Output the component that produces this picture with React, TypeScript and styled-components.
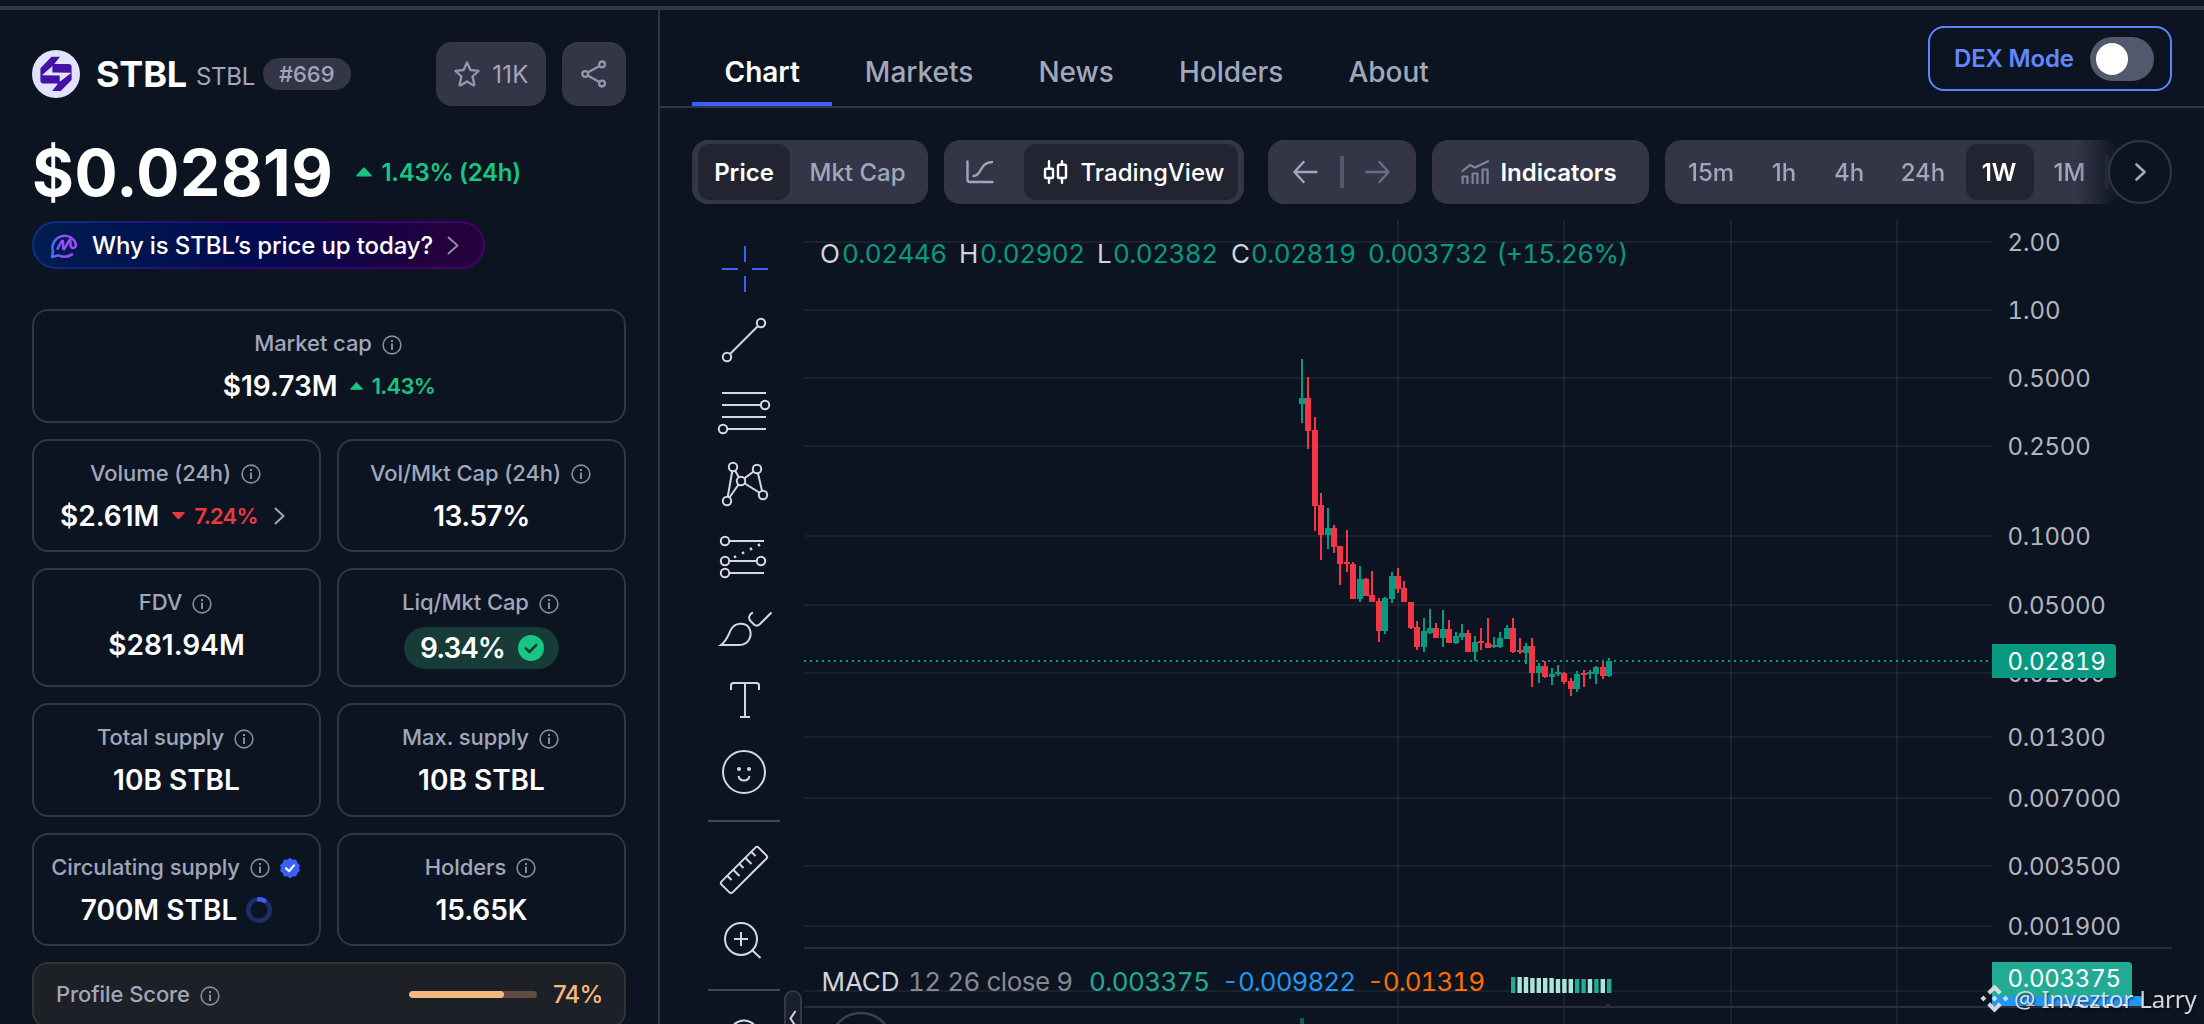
import React from 'react';
import styled, { createGlobalStyle, css } from 'styled-components';

const c = {
  bg: '#0d1421',
  line: '#323546',
  panel: '#343547',
  dark: '#222531',
  text: '#ffffff',
  muted: '#a1a7bb',
  dim: '#858ca2',
  green: '#16c784',
  red: '#ea3943',
  blue: '#3861fb',
  up: '#089981',
  down: '#f23645',
  orange: '#f5b97f',
};

const Global = createGlobalStyle`
  * { box-sizing: border-box; }
  body {
    margin: 0;
    background: ${c.bg};
    color: ${c.text};
    font-family: Inter, "Noto Sans", sans-serif;
    overflow: hidden;
  }
  svg { display: block; flex: none; }
`;

const Page = styled.div`
  position: relative;
  width: 2204px;
  height: 1024px;
  overflow: hidden;
  display: flex;
  flex-direction: column;
`;
const TopLine = styled.div`
  flex: none;
  height: 10px;
  border-bottom: 4px solid ${c.line};
`;
const Body = styled.div`
  flex: 1;
  min-height: 0;
  display: flex;
`;

/* ---------- sidebar ---------- */
const Sidebar = styled.aside`
  width: 660px;
  flex: none;
  padding: 32px 32px 0;
  border-right: 2px solid ${c.line};
  overflow: hidden;
`;
const CoinHeader = styled.div`
  display: flex;
  align-items: center;
  height: 64px;
`;
const CoinName = styled.h1`
  margin: 0 0 0 16px;
  font-size: 36px;
  font-weight: 700;
  line-height: 44px;
  letter-spacing: -0.2px;
`;
const CoinSymbol = styled.span`
  margin: 5px 8px 0 9px;
  font-size: 24px;
  letter-spacing: -0.3px;
  color: ${c.muted};
`;
const Rank = styled.span`
  height: 32px;
  padding: 0 16px;
  border-radius: 16px;
  background: ${c.panel};
  color: ${c.muted};
  font-size: 22px;
  font-weight: 500;
  line-height: 32px;
`;
const SquareButton = styled.button<{ $w: number; $ml?: string }>`
  display: flex;
  align-items: center;
  justify-content: center;
  gap: 11px;
  width: ${p => p.$w}px;
  height: 64px;
  margin-left: ${p => p.$ml || '16px'};
  padding: 0;
  border: 0;
  border-radius: 16px;
  background: ${c.panel};
  color: ${c.muted};
  font: 400 24px Inter, sans-serif;
  letter-spacing: 0.3px;
`;
const PriceRow = styled.div`
  display: flex;
  align-items: center;
  gap: 23px;
  height: 92px;
  margin-top: 20px;
`;
const Price = styled.div`
  font-size: 64px;
  font-weight: 700;
  letter-spacing: 0.55px;
`;
const Change = styled.span<{ $down?: boolean; $big?: boolean }>`
  display: inline-flex;
  align-items: center;
  gap: ${p => (p.$big ? 9 : 9)}px;
  color: ${p => (p.$down ? c.red : c.green)};
  font-size: ${p => (p.$big ? 24 : 22)}px;
  font-weight: 600;
  letter-spacing: ${p => (p.$big ? -0.25 : -0.7)}px;
`;
const WhyPill = styled.button`
  display: flex;
  align-items: center;
  width: 453px;
  height: 48px;
  margin-top: 3px;
  padding: 0 0 0 16px;
  border: 2px solid transparent;
  border-radius: 24px;
  background:
    linear-gradient(90deg, #001d4e, #020a52 52%, #25003d 92%) padding-box,
    linear-gradient(90deg, #0a2f80, #350073 50%, #470070) border-box;
  color: #fff;
  font: 500 24px Inter, sans-serif;
  letter-spacing: -0.12px;
  white-space: nowrap;
`;
const WhyText = styled.span`
  margin: 0 14px;
`;
const Stats = styled.div`
  display: grid;
  grid-template-columns: 289px 289px;
  grid-template-rows: 113.5px 113.5px 119px 113.5px 113.5px 66px;
  gap: 16px;
  margin-top: 40px;
`;
const Card = styled.div<{ $wide?: boolean }>`
  display: flex;
  flex-direction: column;
  align-items: center;
  padding-top: 14px;
  border: 2px solid ${c.line};
  border-radius: 16px;
  white-space: nowrap;
  ${p => p.$wide && css`grid-column: span 2;`}
`;
const Label = styled.div`
  display: flex;
  align-items: center;
  gap: 10px;
  height: 36px;
  margin-right: 2px;
  color: ${c.muted};
  font-size: 22px;
  font-weight: 500;
  letter-spacing: -0.08px;
  svg { margin-top: 3px; }
`;
const Value = styled.div<{ $gap?: number; $tight?: boolean }>`
  display: flex;
  align-items: center;
  gap: ${p => p.$gap || 13}px;
  height: 42px;
  margin-top: 4px;
  font-size: 28px;
  font-weight: 600;
  letter-spacing: ${p => (p.$tight ? -0.5 : 0)}px;
`;
const LinkChevron = styled.span`
  margin: 0 8px 0 3px;
`;
const LiqPill = styled.div`
  display: flex;
  align-items: center;
  gap: 13px;
  height: 42px;
  margin-top: 7px;
  padding: 0 15px 0 16px;
  border-radius: 21px;
  background: #173b37;
  font-size: 28px;
  font-weight: 600;
  letter-spacing: -1px;
`;
const ProfileCard = styled.div`
  grid-column: span 2;
  display: flex;
  align-items: center;
  padding: 0 24px 2px 22px;
  border: 2px solid #37322f;
  border-radius: 16px;
  background: #1e2028;
`;
const ProfileLabel = styled(Label)`
  flex: 1;
  margin-right: 0;
`;
const Meter = styled.div`
  width: 128px;
  height: 7px;
  border-radius: 4px;
  background: #5f4d40;
  overflow: hidden;
`;
const MeterFill = styled.div`
  height: 100%;
  border-radius: 4px;
  background: ${c.orange};
`;
const Score = styled.span`
  width: 47px;
  margin-left: 16px;
  color: ${c.orange};
  font-size: 24px;
  font-weight: 500;
  letter-spacing: -0.8px;
`;

/* ---------- main ---------- */
const Main = styled.main`
  flex: 1;
  min-width: 0;
  display: flex;
  flex-direction: column;
`;
const TabBar = styled.nav`
  flex: none;
  display: flex;
  align-items: flex-end;
  height: 98px;
  padding: 0 32px;
  border-bottom: 2px solid ${c.line};
`;
const Tab = styled.a<{ $active?: boolean }>`
  display: flex;
  align-items: center;
  justify-content: center;
  height: 68px;
  padding: 4px 32.500px 0;
  border-bottom: 4px solid ${p => (p.$active ? c.blue : 'transparent')};
  color: ${p => (p.$active ? '#fff' : c.muted)};
  font-size: 28px;
  font-weight: ${p => (p.$active ? 600 : 500)};
`;
const DexMode = styled.div`
  display: flex;
  align-items: center;
  gap: 16px;
  align-self: flex-start;
  height: 65px;
  width: 244px;
  margin: 16px 0 0 auto;
  padding-left: 24px;
  border: 2px solid #5c84ff;
  border-radius: 16px;
  color: #6188ff;
  font-size: 24px;
  font-weight: 600;
  white-space: nowrap;
  letter-spacing: -0.15px;
`;
const Toggle = styled.div`
  width: 64px;
  height: 44px;
  padding: 6px;
  flex: none;
  border-radius: 22px;
  background: #53586c;
`;
const Knob = styled.div`
  width: 32px;
  height: 32px;
  border-radius: 50%;
  background: #fff;
`;
const Toolbar = styled.div`
  flex: none;
  display: flex;
  height: 64px;
  margin: 32px 32px 0;
`;
const Group = styled.div<{ $w: number; $ml?: number }>`
  display: flex;
  align-items: center;
  flex: none;
  width: ${p => p.$w}px;
  margin-left: ${p => p.$ml || 0}px;
  padding: 4px 6px;
  border-radius: 16px;
  background: ${c.panel};
`;
const Seg = styled.div<{ $w: number; $active?: boolean; $pl?: number; $pr?: number }>`
  display: flex;
  align-items: center;
  justify-content: center;
  gap: 13px;
  flex: none;
  width: ${p => p.$w}px;
  height: 56px;
  padding: 0 ${p => p.$pr || 0}px 0 ${p => p.$pl || 0}px;
  border-radius: 12px;
  background: ${p => (p.$active ? c.dark : 'transparent')};
  color: ${p => (p.$active ? '#fff' : c.muted)};
  font-size: 24px;
  font-weight: ${p => (p.$active ? 600 : 500)};
  white-space: nowrap;
`;
const IndicatorsButton = styled(Group)`
  justify-content: center;
  gap: 10px;
  padding-left: 0;
  padding-right: 3px;
  font-size: 24px;
  font-weight: 600;
`;
const Medium = styled.span`
  font-weight: 500;
  letter-spacing: 0;
`;
const TimeStrip = styled(Group)`
  padding: 4px 0 4px 5px;
  -webkit-mask-image: linear-gradient(90deg, #000 412px, transparent 456px);
  mask-image: linear-gradient(90deg, #000 412px, transparent 456px);
`;
const Bar = styled.div<{ $ml?: number }>`
  width: 4px;
  height: 32px;
  flex: none;
  margin-left: ${p => p.$ml || 0}px;
  background: #53586c;
`;
const NextButton = styled.button`
  display: flex;
  align-items: center;
  justify-content: center;
  flex: none;
  width: 64px;
  height: 64px;
  margin-left: -12px;
  padding: 0;
  border: 2px solid ${c.line};
  border-radius: 50%;
  background: ${c.bg};
  z-index: 1;
`;
const ChartArea = styled.div`
  flex: 1;
  min-height: 0;
  display: flex;
  margin-top: 16px;
  padding-left: 32px;
`;
const Tools = styled.div`
  width: 112px;
  flex: none;
  display: flex;
  flex-direction: column;
  padding: 13px 16px 0;
`;
const ToolRule = styled.div`
  flex: none;
  width: 72px;
  height: 2px;
  margin: 11px 0 12px;
  background: #434651;
`;
const Handle = styled.div`
  position: absolute;
  left: 784px;
  top: 990px;
  display: flex;
  justify-content: center;
  width: 18px;
  height: 60px;
  padding-top: 18px;
  border: 2px solid #363843;
  border-radius: 9px;
  background: #191e2b;
`;
const Watermark = styled.div`
  position: absolute;
  left: 1980px;
  top: 982px;
  display: flex;
  align-items: center;
  gap: 5px;
  height: 32px;
  color: #e3e5ea;
  font: 24px "Noto Sans", sans-serif;
  letter-spacing: -0.15px;
  white-space: nowrap;
  opacity: 0.92;
  text-shadow: 1px 2px 2px rgba(0, 0, 0, 0.55);
`;

/* ---------- small icons ---------- */
const Info = () => (
  <svg width="20" height="20" viewBox="0 0 20 20" fill="none" stroke={c.dim} strokeWidth="1.6">
    <circle cx="10" cy="10" r="8.9" />
    <path d="M10 8.6V15" strokeWidth="2" />
    <path d="M10 5V7" strokeWidth="2" />
  </svg>
);
const Triangle = ({ w = 13, down = false }: { w?: number; down?: boolean }) => (
  <svg width={w} height={w * 0.6} viewBox="0 0 12 7.2" preserveAspectRatio="none" fill="currentColor" stroke="currentColor" strokeLinejoin="round">
    {down ? <path d="M.7 .6H11.3L6 6.5Z" /> : <path d="M.7 6.6H11.3L6 .7Z" />}
  </svg>
);
const Chevron = ({ w, h, color = c.dim, sw = 2 }: { w: number; h: number; color?: string; sw?: number }) => (
  <svg width={w} height={h} viewBox={`0 0 ${w} ${h}`} fill="none" stroke={color} strokeWidth={sw} strokeLinecap="round" strokeLinejoin="round">
    <path d={`M1.5 1.5L${w - 1.5} ${h / 2}L1.5 ${h - 1.5}`} />
  </svg>
);
const CoinLogo = () => (
  <svg width="48" height="48" viewBox="32 50 48 48">
    <circle cx="56" cy="74" r="24" fill="#e2e2fd" />
    <path d="M51.5 56.7H60L54.3 64H68.6Q71.6 64 71.6 67V80L60.8 91H52.2L58 83.6H43.4Q40.4 83.6 40.4 80.6V68.3Z" fill="#4411a6" />
    <path d="M42 75.3L52.4 65.9V72.4L71.6 72.8L59.7 81.7V75.6Z" fill="#e2e2fd" />
  </svg>
);
const Star = () => (
  <svg width="28" height="28" viewBox="0 0 28 28" fill="none" stroke="#9298ac" strokeWidth="2.3" strokeLinejoin="round">
    <path d="M14 2.4L17.4 10L25.6 10.9L19.5 16.5L21.4 24.4Q21.3 25.6 20.2 25.2L14 21.4L7.8 25.2Q6.7 25.6 6.6 24.4L8.5 16.5L2.4 10.9L10.6 10Z" />
  </svg>
);
const Share = () => (
  <svg width="28" height="28" viewBox="0 0 28 28" fill="none" stroke="#9298ac" strokeWidth="2.3">
    <circle cx="22" cy="4.4" r="2.9" /><circle cx="22" cy="23.6" r="2.9" /><circle cx="5.2" cy="14" r="2.9" />
    <path d="M7.8 12.5L19.4 5.9M7.8 15.5L19.4 22.1" />
  </svg>
);
const CmcMark = () => (
  <svg width="28" height="28" viewBox="0 0 28 28" fill="none" strokeLinecap="round" strokeLinejoin="round" strokeWidth="2.5">
    <defs>
      <linearGradient id="cmc" gradientUnits="userSpaceOnUse" x1="0" y1="0" x2="26" y2="0"><stop offset="0" stopColor="#3f6cff" /><stop offset=".45" stopColor="#9050ff" /><stop offset="1" stopColor="#a845ff" /></linearGradient>
    </defs>
    <g stroke="url(#cmc)">
      <path d="M22 23.400Q16 27.500 8.500 24.300L2 26L3 20.500A12 12 0 1 1 26 13.300C26 17.600 20.800 18.300 20.500 14.500V10.500Q20.200 7.600 18.400 10.600L14.600 17.600Q13.200 19 13.100 16.600V11Q12.700 8.300 11.200 11L7.600 17.600" />
    </g>
  </svg>
);
const Check = () => (
  <svg width="26" height="26" viewBox="0 0 26 26">
    <circle cx="13" cy="13" r="13" fill={c.green} />
    <path d="M7.8 13.4L11.4 17L18.2 10" fill="none" stroke="#173b37" strokeWidth="2.6" strokeLinecap="round" strokeLinejoin="round" />
  </svg>
);
const Verified = () => (
  <svg width="20" height="20" viewBox="0 0 20 20">
    <path d="M10 .3L12.6 2.1L15.8 2.1L16.9 5.1L19.4 7L18.5 10L19.4 13L16.9 14.9L15.8 17.9L12.6 17.9L10 19.7L7.4 17.9L4.2 17.9L3.1 14.9L.6 13L1.5 10L.6 7L3.1 5.1L4.2 2.1L7.4 2.1Z" fill={c.blue} stroke={c.blue} strokeLinejoin="round" />
    <path d="M6 10.2L9 13.2L14 7.4" fill="none" stroke="#fff" strokeWidth="2.2" strokeLinecap="round" strokeLinejoin="round" />
  </svg>
);
const Ring = () => (
  <svg width="26" height="26" viewBox="0 0 26 26" fill="none" strokeWidth="4.4">
    <circle cx="13" cy="13" r="10.8" stroke="#1d2f6a" />
    <path d="M13 2.2A10.8 10.8 0 0 1 18.2 3.6" stroke="#3861fb" strokeLinecap="round" />
  </svg>
);
const LineChartIcon = () => (
  <svg width="28" height="24" viewBox="0 0 28 24" fill="none" stroke={c.muted} strokeWidth="2.4" strokeLinecap="round">
    <path d="M1.5 1.5V19.5Q1.5 22 4 22H26.5" />
    <path d="M7.5 16C16 16 13 2.5 26 2" />
  </svg>
);
const CandleIcon = () => (
  <svg width="25" height="24" viewBox="0 0 25 24" fill="none" stroke="#fff" strokeWidth="2.4" strokeLinecap="round" strokeLinejoin="round">
    <path d="M6 1.2V8.5M6 18V22.8M19 1.2V4.5M19 18V22.8" />
    <rect x="2" y="8.8" width="8" height="9.2" rx="1" /><rect x="15" y="4.8" width="8" height="13.2" rx="1" />
  </svg>
);
const Arrow = ({ flip = false }: { flip?: boolean }) => (
  <svg width="25" height="24" viewBox="0 0 25 24" fill="none" stroke={flip ? '#696f84' : c.muted} strokeWidth="2.4" strokeLinecap="round" strokeLinejoin="round">
    <path d={flip ? 'M1.5 12H23.5M14.5 2L23.5 12L14.5 22' : 'M23.5 12H1.5M10.5 2L1.5 12L10.5 22'} />
  </svg>
);
const IndicatorsIcon = () => (
  <svg width="29" height="24" viewBox="0 0 29 24" fill="none" stroke="#7d8399" strokeWidth="2.2" strokeLinecap="round" strokeLinejoin="round">
    <path d="M1.5 11L9 5L14 7.5L27 1.2" />
    <path d="M1.6 23V16.5H6.4V23M11.6 23V13.5H16.4V23M21.6 23V9.5H26.6V23" />
  </svg>
);

/* ---------- drawing tools ---------- */
const Tool = ({ y, children, color = '#d6d8e0' }: { y: number; color?: string; children: React.ReactNode }) => (
  <svg width="72" height="72" viewBox={`708 ${y} 72 72`} fill="none" stroke={color} strokeWidth="2">{children}</svg>
);
const Dots = ({ pts, r = 4.2 }: { pts: number[][]; r?: number }) => (
  <>{pts.map(([x, y]) => <circle key={`${x},${y}`} cx={x} cy={y} r={r} fill={c.bg} />)}</>
);

/* ---------- chart data ---------- */
const gridRows = [242, 310, 378, 446, 536, 605, 673, 737, 798, 866, 926, 991];
const gridCols = [1398, 1564, 1731, 1897];
const ticks: [string, number][] = [
  ['2.00', 242], ['1.00', 310], ['0.5000', 378], ['0.2500', 446], ['0.1000', 536], ['0.05000', 605],
  ['0.02500', 673], ['0.01300', 737], ['0.007000', 798], ['0.003500', 866], ['0.001900', 926],
];
/* x, high, body top, body bottom, low, rising */
const candles: number[][] = [
  [66, 57, 174, 192, 249, 1], [84, 111, 174, 273, 327, 0], [105, 231, 270, 498, 573, 0], [123, 459, 495, 585, 660, 0],
  [144, 504, 564, 585, 627, 1], [162, 555, 564, 621, 639, 0], [180, 618, 618, 672, 735, 0], [201, 570, 666, 672, 696, 0],
  [219, 666, 672, 777, 777, 0], [240, 678, 717, 777, 786, 1], [258, 714, 717, 768, 768, 0], [276, 693, 765, 786, 786, 0],
  [297, 774, 783, 873, 906, 0], [315, 771, 774, 873, 882, 1], [336, 696, 708, 777, 789, 1], [354, 684, 708, 747, 759, 0],
  [372, 723, 744, 786, 786, 0], [393, 786, 786, 864, 867, 0], [411, 843, 861, 921, 930, 0], [432, 834, 873, 921, 936, 1],
  [450, 807, 864, 879, 882, 1], [468, 849, 864, 894, 894, 0], [489, 810, 867, 894, 921, 1], [507, 840, 867, 909, 909, 0],
  [528, 876, 888, 909, 912, 1], [546, 852, 879, 891, 900, 1], [564, 870, 879, 936, 936, 0], [585, 888, 906, 936, 963, 1],
  [603, 864, 903, 909, 930, 0], [624, 834, 909, 924, 924, 0], [642, 891, 915, 921, 924, 1], [660, 876, 894, 921, 924, 1],
  [681, 855, 864, 897, 897, 1], [699, 834, 864, 936, 939, 0], [720, 894, 930, 936, 942, 0], [738, 909, 918, 939, 972, 1],
  [756, 894, 918, 999, 1041, 0], [777, 969, 978, 999, 1029, 1], [795, 963, 978, 1011, 1014, 0], [816, 984, 1002, 1011, 1035, 1],
  [834, 975, 996, 1002, 1008, 1], [852, 996, 999, 1026, 1032, 0], [873, 1014, 1023, 1047, 1068, 0], [891, 993, 1002, 1047, 1056, 1],
  [912, 990, 999, 1005, 1041, 0], [930, 990, 996, 1002, 1017, 1], [948, 978, 981, 1002, 1032, 1], [969, 963, 981, 1008, 1017, 0],
  [987, 954, 963, 1008, 1011, 1],
];
const px = (v: number) => 1280 + v / 3;
const py = (v: number) => 340 + v / 3;
const macdStrong = [0, 10, 11, 13, 15];
const macdTop = [977, 977, 977, 978, 978, 978, 978, 979, 979, 979, 979, 979, 979, 979, 979, 979];

/* text, x, rendered width, colour */
const ohlc: [string, number, number, string][] = [
  ['O', 820, 20, '#d1d4dc'], ['0.02446', 842, 105, c.up], ['H', 959, 20, '#d1d4dc'], ['0.02902', 980, 105, c.up],
  ['L', 1097, 16, '#d1d4dc'], ['0.02382', 1113, 105, c.up], ['C', 1231, 20, '#d1d4dc'], ['0.02819', 1251, 105, c.up],
  ['0.003732', 1368, 120, c.up], ['(+15.26%)', 1496.5, 132, c.up],
];
const macd: [string, number, number, string][] = [
  ['MACD', 821.5, 78, '#d1d4dc'], ['12 26 close 9', 908, 165, '#868993'], ['0.003375', 1089, 121, '#22ab94'],
  ['-0.009822', 1222, 134, '#2196f3'], ['-0.01319', 1367, 118, '#ff6d00'],
];
/* advance of a price label: fixed-width digits plus a point */
const tickWidth = (t: string) => (t.length - 1) * 15.1 + 7.8;

const ChartSvg = styled.svg`
  font-family: Inter, sans-serif;
  font-variant-numeric: tabular-nums;
`;

const Chart = () => (
  <ChartSvg width="1400" height="804" viewBox="804 220 1400 804" fontSize="24">
    <g fill="#ffffff" fillOpacity="0.06" shapeRendering="crispEdges">
      {gridRows.map(y => <rect key={y} x="804" y={y - 1} width="1188" height="2" />)}
      {gridCols.map(x => <rect key={x} x={x - 1} y="220" width="2" height="804" />)}
    </g>
    <g fill="#2b2e39" shapeRendering="crispEdges">
      <rect x="804" y="947" width="1368" height="2" />
      <rect x="804" y="1006" width="1368" height="2" />
    </g>
    <g shapeRendering="crispEdges">
      {candles.map(([x, h, t, b, l, up]) => (
        <g key={x} fill={up ? c.up : c.down}>
          <rect x={px(x) - 1} y={py(h)} width="2" height={(l - h) / 3} />
          <rect x={px(x) - 3} y={py(t)} width="6" height={(b - t) / 3} />
        </g>
      ))}
    </g>
    <path d="M804 661H1992" stroke={c.up} strokeWidth="2" strokeDasharray="2 4" shapeRendering="crispEdges" />
    <g fontSize="26">
      {ohlc.map(([t, x, w, f]) => <text key={x} x={x} y="262.5" textLength={w} fill={f}>{t}</text>)}
      {macd.map(([t, x, w, f]) => <text key={x} x={x} y="991" textLength={w} fill={f}>{t}</text>)}
    </g>
    {macdTop.map((y, i) => (
      <rect key={i} x={1511 + i * 6.4} y={y} width="4.4" height={993 - y} fill={macdStrong.includes(i) ? '#22ab94' : '#ace5dc'} />
    ))}
    <rect x="1606" y="1004" width="4" height="2" fill="#1c2c55" />
    <rect x="1300" y="1018" width="4" height="6" fill="#135a54" />
    <circle cx="861" cy="1044" r="31" fill={c.bg} stroke="#3c3f4a" strokeWidth="2.5" />

    <g fill="#b2b5be">
      {ticks.map(([t, y]) => <text key={t} x="2007.5" y={y + 9} textLength={tickWidth(t)}>{t}</text>)}
    </g>
    <path d="M1992 644H2112Q2116 644 2116 648V674Q2116 678 2112 678H1992Z" fill={c.up} />
    <text x="2007.5" y="669.7" fill="#fff" textLength={tickWidth('0.02819')}>0.02819</text>
    <clipPath id="macd-pane"><rect x="1992" y="948" width="212" height="58" /></clipPath>
    <g clipPath="url(#macd-pane)">
      <path d="M1992 996H2139Q2143 996 2143 1000V1030H1992Z" fill="#2196f3" />
      <text x="2007.5" y="1021.5" fill="#fff" textLength="124">-0.009822</text>
      <path d="M1992 962H2128Q2132 962 2132 966V996H1992Z" fill="#22ab94" />
      <text x="2007.5" y="987.3" fill="#fff" textLength={tickWidth('0.003375')}>0.003375</text>
    </g>
  </ChartSvg>
);

const Stat = ({ label, children, extra }: { label: string; children: React.ReactNode; extra?: React.ReactNode }) => (
  <Card>
    <Label>{label}<Info />{extra}</Label>
    {children}
  </Card>
);

/* label, width, right padding */
const frames: [string, number, number][] = [['15m', 82, 0], ['1h', 64, 0], ['4h', 66, 0], ['24h', 84, 2], ['1W', 68, 2], ['1M', 71, 0]];

export default function App() {
  return (
    <Page>
      <Global />
      <TopLine />
      <Body>
        <Sidebar>
          <CoinHeader>
            <CoinLogo />
            <CoinName>STBL</CoinName>
            <CoinSymbol>STBL</CoinSymbol>
            <Rank>#669</Rank>
            <SquareButton $w={110} $ml="auto"><Star />11K</SquareButton>
            <SquareButton $w={64}><Share /></SquareButton>
          </CoinHeader>
          <PriceRow>
            <Price>$0.02819</Price>
            <Change $big><Triangle w={16} />1.43% (24h)</Change>
          </PriceRow>
          <WhyPill>
            <CmcMark />
            <WhyText>Why is STBL’s price up today?</WhyText>
            <Chevron w={12} h={19} color="#8b8ca8" />
          </WhyPill>
          <Stats>
            <Card $wide>
              <Label>Market cap<Info /></Label>
              <Value $gap={12}>$19.73M<Change><Triangle />1.43%</Change></Value>
            </Card>
            <Stat label="Volume (24h)">
              <Value>$2.61M<Change $down><Triangle down />7.24%</Change><LinkChevron><Chevron w={11} h={18} color={c.muted} /></LinkChevron></Value>
            </Stat>
            <Stat label="Vol/Mkt Cap (24h)"><Value $tight>13.57%</Value></Stat>
            <Stat label="FDV"><Value>$281.94M</Value></Stat>
            <Stat label="Liq/Mkt Cap"><LiqPill>9.34%<Check /></LiqPill></Stat>
            <Stat label="Total supply"><Value>10B STBL</Value></Stat>
            <Stat label="Max. supply"><Value>10B STBL</Value></Stat>
            <Stat label="Circulating supply" extra={<Verified />}><Value $gap={9}>700M STBL<Ring /></Value></Stat>
            <Stat label="Holders"><Value>15.65K</Value></Stat>
            <ProfileCard>
              <ProfileLabel>Profile Score<Info /></ProfileLabel>
              <Meter><MeterFill style={{ width: '74%' }} /></Meter>
              <Score>74%</Score>
            </ProfileCard>
          </Stats>
        </Sidebar>
        <Main>
          <TabBar>
            <Tab $active>Chart</Tab>
            <Tab>Markets</Tab>
            <Tab>News</Tab>
            <Tab>Holders</Tab>
            <Tab>About</Tab>
            <DexMode>DEX Mode<Toggle><Knob /></Toggle></DexMode>
          </TabBar>
          <Toolbar>
            <Group $w={236}>
              <Seg $w={92} $active>Price</Seg>
              <Seg $w={136} $pr={1}>Mkt Cap</Seg>
            </Group>
            <Group $w={300} $ml={16}>
              <Seg $w={74} $pr={14}><LineChartIcon /></Seg>
              <Seg $w={214} $pl={5} $active><CandleIcon /><Medium>TradingView</Medium></Seg>
            </Group>
            <Group $w={148} $ml={24}>
              <Seg $w={64} $pr={1}><Arrow /></Seg>
              <Bar $ml={2} />
              <Seg $w={68} $pr={1}><Arrow flip /></Seg>
            </Group>
            <IndicatorsButton $w={217} $ml={16}><IndicatorsIcon />Indicators</IndicatorsButton>
            <TimeStrip $w={455} $ml={16}>
              {frames.map(([t, w, pr]) => <Seg key={t} $w={w} $pr={pr} $active={t === '1W'}>{t}</Seg>)}
              <Bar />
            </TimeStrip>
            <NextButton><Chevron w={11} h={18} color={c.muted} sw={2.6} /></NextButton>
          </Toolbar>
          <ChartArea>
            <Tools>
              <Tool y={233} color="#3861fb"><path d="M745 246V262M745 276V292M722 269H738M752 269H768" /></Tool>
              <Tool y={305}><path d="M727 357L761 323" /><Dots pts={[[761, 323], [727, 357]]} /></Tool>
              <Tool y={377}><path d="M722 393H766M722 405H761M722 417H766M723 429H766" /><Dots pts={[[765, 405], [723, 429]]} /></Tool>
              <Tool y={449}>
                <path d="M733 467L727 501L741 481ZM757 469L763 495L741 481Z" />
                <Dots pts={[[733, 467], [757, 469], [741, 481], [763, 495], [727, 501]]} />
              </Tool>
              <Tool y={521}>
                <path d="M725 541H764M725 561H761M725 573H764" />
                <path d="M734 557.4L761 544" strokeDasharray="2.4 6.5" strokeWidth="2.6" />
                <Dots pts={[[725, 541], [725, 561], [761, 561], [725, 573]]} />
              </Tool>
              <Tool y={593}>
                <path d="M753 612.5C749 614 748 618 750.5 621L754.5 625Q757 626.5 759.5 624.5L771.5 612.5" />
                <path d="M721 645C728 640 729 632 732 628C736 622.500 745 622.500 748.5 627C753 634 750 645 739 645Z" />
              </Tool>
              <Tool y={665}><path d="M731 690V685.500Q731 683 733.500 683H756.500Q759 683 759 685.500V690M745 683V717M740 717H750" /></Tool>
              <Tool y={737}>
                <circle cx="744" cy="772" r="21" />
                <path d="M738.5 776Q739.5 780.500 744 780.500Q748.500 780.500 749.500 776" />
                <circle cx="739" cy="769" r="2" fill="#d6d8e0" stroke="none" /><circle cx="749" cy="769" r="2" fill="#d6d8e0" stroke="none" />
              </Tool>
              <ToolRule />
              <Tool y={834}>
                <path d="M755.4 847.6Q757 846 758.600 847.600L766.400 855.400Q768 857 766.400 858.600L732.600 892.400Q731 894 729.400 892.400L721.600 884.600Q720 883 721.600 881.400Z" strokeLinejoin="round" />
                <path d="M727 875.500L731.500 880M733 869.500L739.500 876M739 863.500L743.500 868M745 857.500L751.500 864M751 851.500L755.500 856" />
              </Tool>
              <Tool y={906}><circle cx="741" cy="939" r="16" /><path d="M734 939H748M741 932V946M752.500 950.500L760.500 958" /></Tool>
              <ToolRule />
              <Tool y={1003}><circle cx="744" cy="1035" r="14.5" /></Tool>
            </Tools>
            <Chart />
          </ChartArea>
        </Main>
      </Body>
      <Handle>
        <svg width="8" height="20" viewBox="0 0 8 20" fill="none" stroke="#d1d4dc" strokeWidth="2"><path d="M6.500 1L1.500 8.500L6.500 16" /></svg>
      </Handle>
      <Watermark>
        <svg width="29" height="29" viewBox="0 0 28 28" fill="currentColor">
          <path d="M14 .5L21 7.500L18.200 10.300L14 6.100L9.800 10.300L7 7.500ZM14 27.500L7 20.500L9.800 17.700L14 21.900L18.200 17.700L21 20.500ZM3.300 11.200L6.100 14L3.300 16.800L.5 14ZM24.700 11.200L27.500 14L24.700 16.800L21.900 14ZM14 11.200L16.800 14L14 16.800L11.200 14Z" />
        </svg>
        @ Inveztor Larry
      </Watermark>
    </Page>
  );
}
